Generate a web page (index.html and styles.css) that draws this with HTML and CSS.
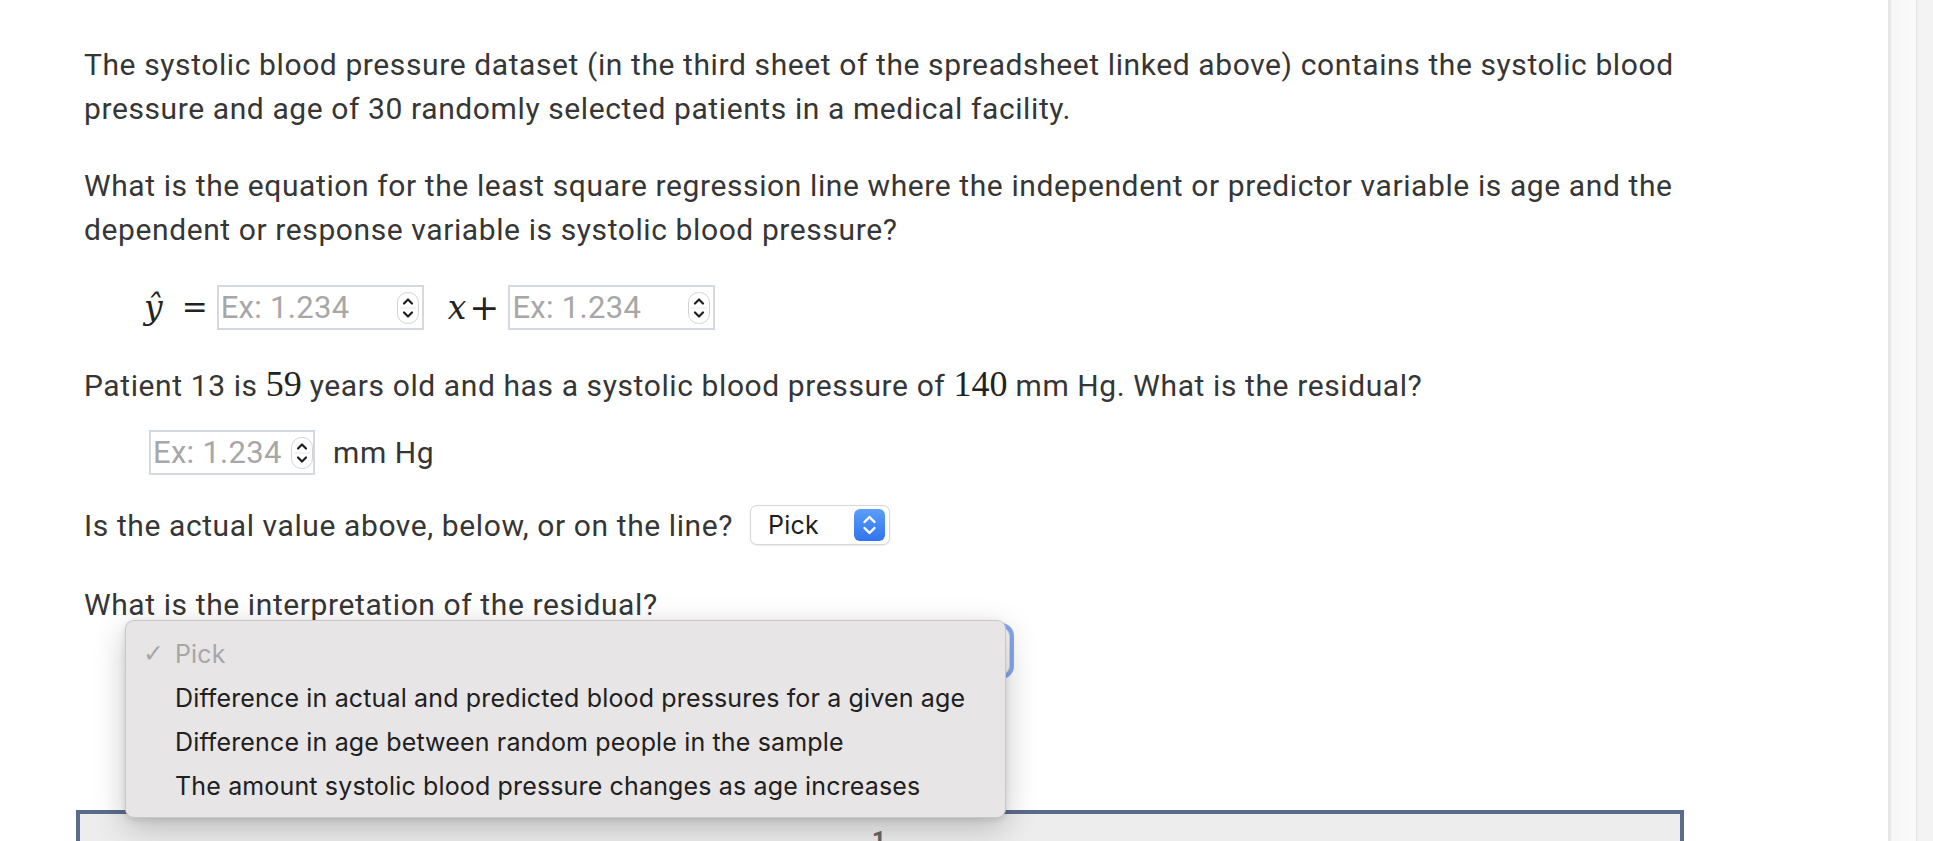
FILE: index.html
```html
<!DOCTYPE html>
<html lang="en">
<head>
<meta charset="utf-8">
<title>Regression question</title>
<link rel="stylesheet" href="styles.css">
</head>
<body>
<div class="page">
  <div class="main">
    <div class="content">
      <p class="para p1">The systolic blood pressure dataset (in the third sheet of the spreadsheet linked above) contains the systolic blood pressure and age of 30 randomly selected patients in a medical facility.</p>
      <p class="para p2">What is the equation for the least square regression line where the independent or predictor variable is age and the dependent or response variable is systolic blood pressure?</p>

      <div class="eq-row">
        <span class="mvar yhat">ŷ</span>
        <span class="mop eq">=</span>
        <div class="num-input w-eq">
          <input type="text" placeholder="Ex: 1.234">
          <svg class="spin" viewBox="0 0 22 32" width="22" height="32"><rect x="0.5" y="0.5" width="21" height="31" rx="10" fill="#fff" stroke="#d2d2d2"/><line x1="3" y1="16" x2="19" y2="16" stroke="#e8e8e8"/><path d="M7 11.5 L11 7.5 L15 11.5" fill="none" stroke="#1e1e1e" stroke-width="2.2" stroke-linecap="round" stroke-linejoin="round"/><path d="M7 20.5 L11 24.5 L15 20.5" fill="none" stroke="#1e1e1e" stroke-width="2.2" stroke-linecap="round" stroke-linejoin="round"/></svg>
        </div>
        <span class="mvar xvar">x</span><span class="mop plus">+</span>
        <div class="num-input w-eq">
          <input type="text" placeholder="Ex: 1.234">
          <svg class="spin" viewBox="0 0 22 32" width="22" height="32"><rect x="0.5" y="0.5" width="21" height="31" rx="10" fill="#fff" stroke="#d2d2d2"/><line x1="3" y1="16" x2="19" y2="16" stroke="#e8e8e8"/><path d="M7 11.5 L11 7.5 L15 11.5" fill="none" stroke="#1e1e1e" stroke-width="2.2" stroke-linecap="round" stroke-linejoin="round"/><path d="M7 20.5 L11 24.5 L15 20.5" fill="none" stroke="#1e1e1e" stroke-width="2.2" stroke-linecap="round" stroke-linejoin="round"/></svg>
        </div>
      </div>

      <p class="para p3">Patient 13 is <span class="mnum">59</span> years old and has a systolic blood pressure of <span class="mnum">140</span> mm Hg. What is the residual?</p>

      <div class="resid-row">
        <div class="num-input w-res">
          <input type="text" placeholder="Ex: 1.234">
          <svg class="spin" viewBox="0 0 22 32" width="22" height="32"><rect x="0.5" y="0.5" width="21" height="31" rx="10" fill="#fff" stroke="#d2d2d2"/><line x1="3" y1="16" x2="19" y2="16" stroke="#e8e8e8"/><path d="M7 11.5 L11 7.5 L15 11.5" fill="none" stroke="#1e1e1e" stroke-width="2.2" stroke-linecap="round" stroke-linejoin="round"/><path d="M7 20.5 L11 24.5 L15 20.5" fill="none" stroke="#1e1e1e" stroke-width="2.2" stroke-linecap="round" stroke-linejoin="round"/></svg>
        </div>
        <span class="unit">mm Hg</span>
      </div>

      <div class="pick-row">
        <span class="para-inline">Is the actual value above, below, or on the line?</span>
        <div class="select sel-small">
          <span class="sel-text">Pick</span>
          <svg class="sel-btn" viewBox="0 0 31 32" width="31" height="32"><defs><linearGradient id="g1" x1="0" y1="0" x2="0" y2="1"><stop offset="0" stop-color="#5c9ef9"/><stop offset="1" stop-color="#2f74ec"/></linearGradient></defs><rect x="0" y="0" width="31" height="32" rx="6" fill="url(#g1)"/><path d="M10.5 13 L15.5 8 L20.5 13" fill="none" stroke="#fff" stroke-width="2.4" stroke-linecap="round" stroke-linejoin="round"/><path d="M10.5 19 L15.5 24 L20.5 19" fill="none" stroke="#fff" stroke-width="2.4" stroke-linecap="round" stroke-linejoin="round"/></svg>
        </div>
      </div>

      <p class="para p-interp">What is the interpretation of the residual?</p>

      <div class="interp-wrap">
        <div class="select sel-wide"></div>
        <div class="menu">
          <div class="menu-item checked"><span class="check">✓</span>Pick</div>
          <div class="menu-item">Difference in actual and predicted blood pressures for a given age</div>
          <div class="menu-item">Difference in age between random people in the sample</div>
          <div class="menu-item">The amount systolic blood pressure changes as age increases</div>
        </div>
      </div>

      <div class="graph-box">
        <span class="graph-label">1</span>
      </div>
    </div>
  </div>
  <div class="gutter">
    <div class="g-line"></div>
    <div class="g-track"></div>
    <div class="g-edge"></div>
    <div class="g-bar"></div>
  </div>
</div>
</body>
</html>
```

FILE: styles.css
```css
html, body {
  margin: 0;
  padding: 0;
}
body {
  height: 841px;
  overflow: hidden;
  background: #ffffff;
  font-family: Roboto, "Liberation Sans", sans-serif;
  color: #363636;
}
.page {
  display: flex;
  height: 841px;
}
.main {
  flex: 1;
  min-width: 0;
  background: #ffffff;
}
.content {
  width: 1600px;
  margin-left: 84px;
  padding-top: 43px;
}
.para,
.pick-row,
.unit {
  font-size: 30px;
  letter-spacing: 0.6px;
}
.para {
  margin: 0;
  line-height: 44px;
}
.p2 { margin-top: 33px; }

.eq-row {
  margin-top: 33px;
  height: 45px;
  display: flex;
  align-items: center;
  padding-left: 60px;
}
.mvar {
  font-family: "DejaVu Serif", "Liberation Serif", serif;
  font-style: italic;
  font-size: 33px;
  color: #222;
  line-height: 1;
}
.mop {
  font-family: "DejaVu Serif", serif;
  font-size: 31px;
  color: #222;
  line-height: 1;
}
.eq { margin: 0 9px 0 19px; }
.xvar { margin-left: 24px; }
.plus { font-size: 36px; margin: 0 9px 0 3px; }

.num-input {
  box-sizing: border-box;
  height: 45px;
  border: 2px solid #d3d9df;
  background: #fff;
  display: flex;
  align-items: center;
  padding: 0 3px 0 2px;
}
.num-input input {
  flex: 1;
  min-width: 0;
  border: none;
  outline: none;
  padding: 0;
  margin: 0;
  background: transparent;
  font-family: Roboto, "Liberation Sans", sans-serif;
  font-size: 31px;
  letter-spacing: 0.3px;
  color: #333;
}
.num-input input::placeholder {
  color: #a7a7a7;
}
.spin { flex: none; display: block; }
.w-eq { width: 207px; }
.w-res { width: 166px; padding-right: 0; }

.p3 { margin-top: 34px; }
.mnum {
  font-family: "Liberation Serif", "DejaVu Serif", serif;
  font-size: 36px;
  letter-spacing: 0;
  line-height: 1;
  color: #222;
}

.resid-row {
  margin-top: 22px;
  padding-left: 65px;
  height: 45px;
  display: flex;
  align-items: center;
}
.unit {
  margin-left: 18px;
}

.pick-row {
  margin-top: 28px;
  height: 44px;
  display: flex;
  align-items: center;
}
.select {
  box-sizing: border-box;
  background: #fff;
  border: 1px solid #d6d6d6;
  border-radius: 7px;
  box-shadow: 0 1px 2px rgba(0, 0, 0, 0.08);
}
.sel-small {
  margin-left: 17px;
  width: 140px;
  height: 40px;
  display: flex;
  align-items: center;
  justify-content: space-between;
  padding: 0 4px 0 17px;
  letter-spacing: 0;
}
.sel-text {
  font-family: Inter, "Noto Sans", sans-serif;
  font-size: 25px;
  letter-spacing: 0.2px;
  color: #1d1d1d;
}
.sel-btn { display: block; }

.p-interp { margin-top: 36px; }

.interp-wrap {
  position: relative;
  margin-left: 65px;
  width: 861px;
  height: 48px;
}
.sel-wide {
  width: 861px;
  height: 48px;
  border-radius: 9px;
  box-shadow: 0 0 0 4px #86aaf0;
}
.menu {
  position: absolute;
  top: -7px;
  left: -24px;
  width: 881px;
  box-sizing: border-box;
  padding: 11px 0 9px;
  background: #e8e5e6;
  border-radius: 9px;
  border: 1px solid rgba(0, 0, 0, 0.13);
  box-shadow: 0 10px 32px rgba(0, 0, 0, 0.22), 0 2px 6px rgba(0, 0, 0, 0.1);
  z-index: 5;
}
.menu-item {
  height: 44px;
  line-height: 44px;
  padding-left: 49px;
  position: relative;
  font-family: Inter, "Noto Sans", sans-serif;
  font-size: 25px;
  letter-spacing: 0.15px;
  color: #202020;
  white-space: nowrap;
}
.menu-item.checked { color: #a8a6a7; }
.check {
  position: absolute;
  left: 17px;
  top: 0;
  font-family: "DejaVu Sans", sans-serif;
  font-size: 25px;
}

.graph-box {
  margin-top: 135px;
  margin-left: -8px;
  width: 1608px;
  height: 120px;
  box-sizing: border-box;
  border: 4px solid #5b6b8c;
  background: #ededed;
  padding: 12px 0 0 792px;
}
.graph-label {
  font-family: Roboto, "Liberation Sans", sans-serif;
  font-weight: 700;
  font-size: 24px;
  color: #666;
}

.gutter {
  width: 45px;
  flex: none;
  display: flex;
}
.g-line { width: 3px; background: #e7e7e7; }
.g-track { width: 25px; background: linear-gradient(to right, #f6f6f6, #fbfbfb); }
.g-edge { width: 1px; background: #e3e3e3; }
.g-bar { flex: 1; background: #f3f3f3; }
```
